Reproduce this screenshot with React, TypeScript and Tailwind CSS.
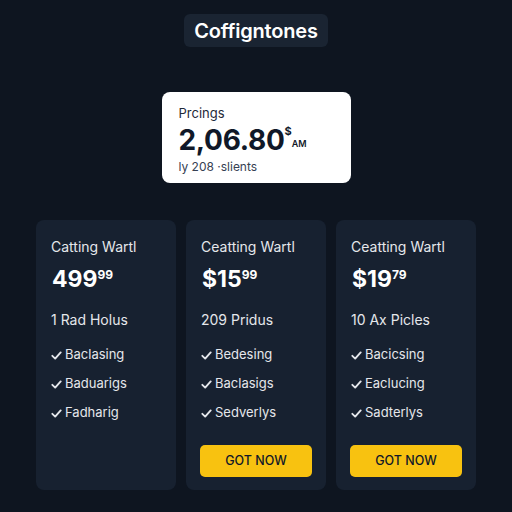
import React from "react"

type Plan = {
  title: string
  cur: string
  whole: string
  cents: string
  sub: string
  features: string[]
  button: boolean
}

const plans: Plan[] = [
  { title: "Catting Wartl", cur: "", whole: "499", cents: "99", sub: "1 Rad Holus", features: ["Baclasing", "Baduarigs", "Fadharig"], button: false },
  { title: "Ceatting Wartl", cur: "$", whole: "15", cents: "99", sub: "209 Pridus", features: ["Bedesing", "Baclasigs", "Sedverlys"], button: true },
  { title: "Ceatting Wartl", cur: "$", whole: "19", cents: "79", sub: "10 Ax Picles", features: ["Bacicsing", "Eaclucing", "Sadterlys"], button: true },
]

const Check = () => (
  <svg width="11" height="11" viewBox="0 0 10 10" className="mr-[3px] shrink-0">
    <path d="M1.2 5.3 L3.8 7.8 L8.8 2.2" fill="none" stroke="#e5e7eb" strokeWidth="1.7" strokeLinecap="round" strokeLinejoin="round" />
  </svg>
)

const App = () => {
  return (
    <div className="w-[512px] h-[512px] bg-[#0e1520] flex flex-col items-center overflow-hidden" style={{ fontFamily: "Inter, 'Noto Sans', sans-serif" }}>
      <div className="mt-[14px] h-[33px] px-[10px] rounded-md bg-[#1a2432] flex items-center">
        <span className="text-[20px] font-semibold text-white leading-none tracking-[-0.2px]">Coffigntones</span>
      </div>

      <div className="mt-[45px] w-[189px] h-[91px] bg-white rounded-lg pl-[17px] pt-[12px] flex flex-col">
        <span className="text-[13px] text-gray-800 leading-[18px]">Prcings</span>
        <div className="flex items-start mt-[4px] leading-none">
          <span className="text-[28px] font-bold text-gray-900 tracking-[-0.3px]">2,06.80</span>
          <span className="text-[11px] font-bold text-gray-900 mt-[0px]">$</span>
          <span className="text-[9px] font-semibold text-gray-900 mt-[13px]">AM</span>
        </div>
        <span className="text-[12px] text-gray-700 mt-[5px] leading-[16px]">ly 208 ·slients</span>
      </div>

      <div className="mt-[37px] flex gap-[10px]">
        {plans.map((p, i) => (
          <div key={i} className="w-[140px] h-[270px] bg-[#172130] rounded-lg px-[14px] pt-[17px] flex flex-col">
            <span className="text-[14px] text-gray-200 leading-[20px] pl-[1px]">{p.title}</span>
            <div className="flex items-start mt-[11px] leading-none text-white font-bold pl-[2px]">
              {p.cur && <span className="text-[23px]">{p.cur}</span>}
              <span className="text-[23px]">{p.whole}</span>
              <span className="text-[12px] mt-[1px]">{p.cents}</span>
            </div>
            <span className="text-[14px] text-gray-200 mt-[19px] leading-[20px] pl-[1px]">{p.sub}</span>
            <div className="flex flex-col mt-[15px] gap-[9px] pl-[1px]">
              {p.features.map((f, j) => (
                <div key={j} className="flex items-center h-[20px]">
                  <Check />
                  <span className="text-[13px] text-gray-200">{f}</span>
                </div>
              ))}
            </div>
            {p.button && (
              <button className="mt-[22px] h-[32px] rounded-[5px] bg-[#f8c210] text-[12.5px] font-medium text-gray-900 w-full">
                GOT NOW
              </button>
            )}
          </div>
        ))}
      </div>
    </div>
  )
}

export default App
